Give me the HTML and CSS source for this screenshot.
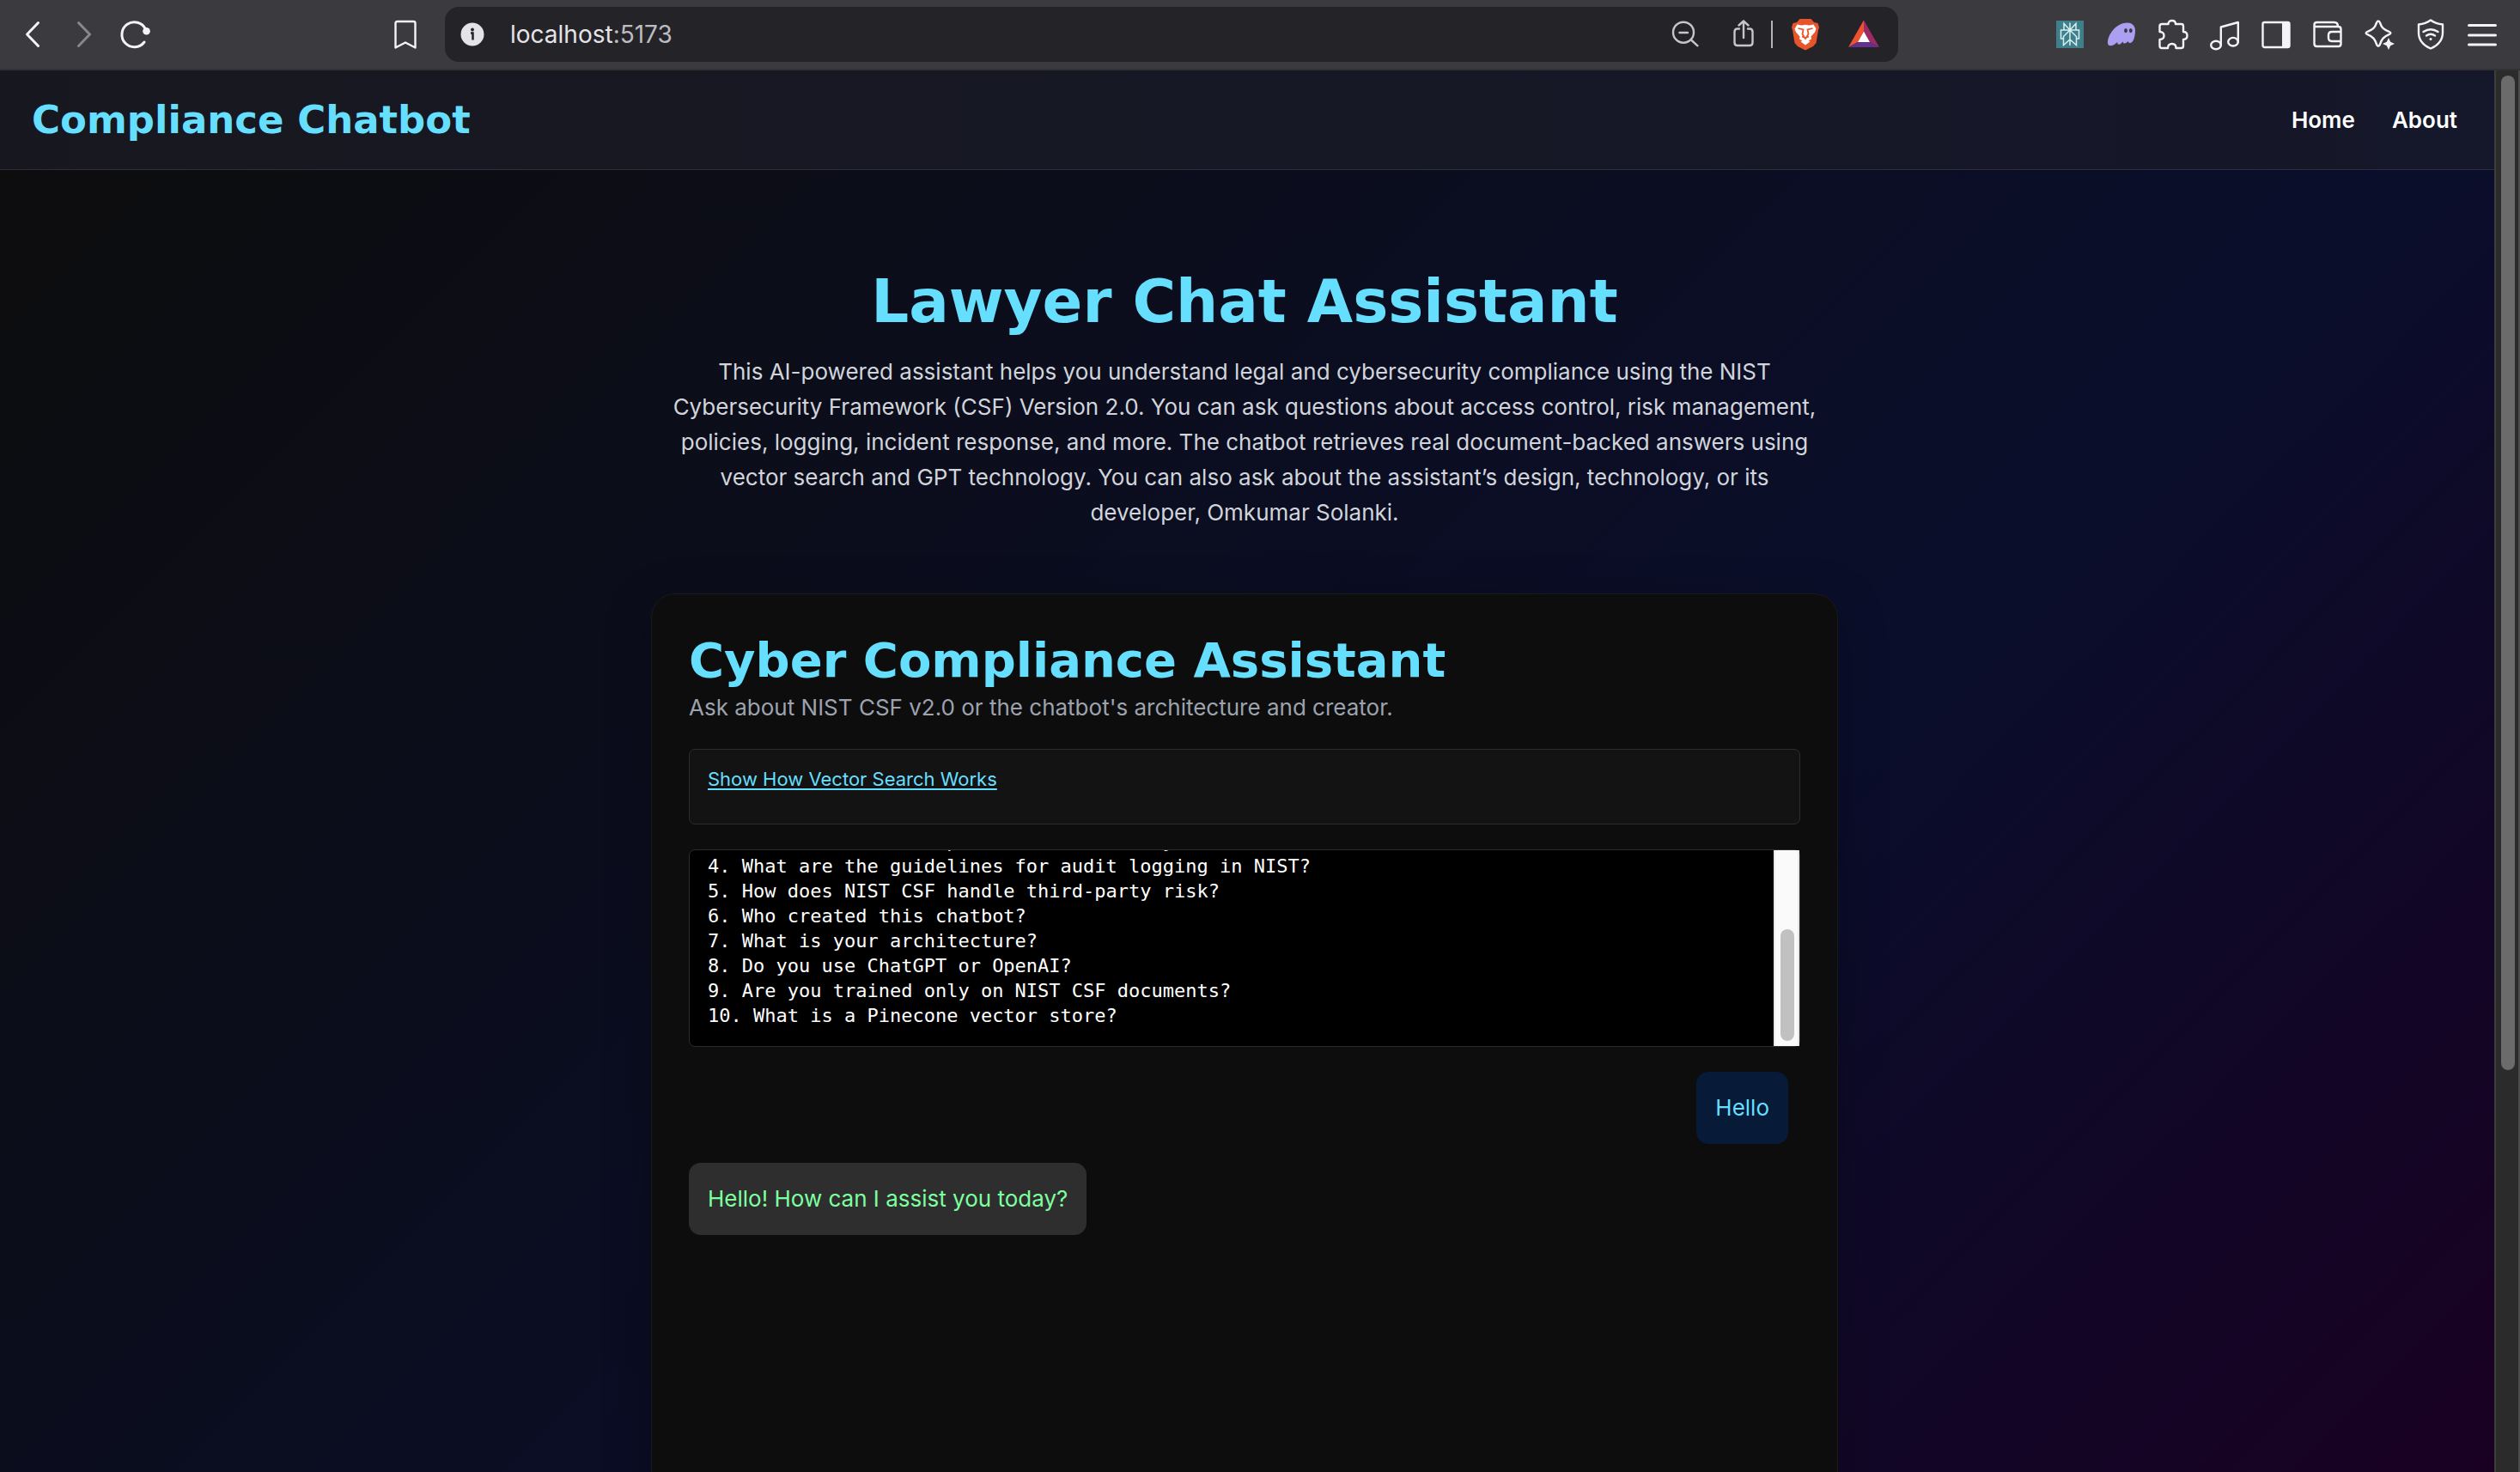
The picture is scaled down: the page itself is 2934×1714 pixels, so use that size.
FILE: index.html
```html
<!DOCTYPE html>
<html lang="en">
<head>
<meta charset="utf-8">
<meta name="viewport" content="width=device-width, initial-scale=1">
<title>Compliance Chatbot</title>
<link rel="stylesheet" href="styles.css">
</head>
<body>
<div class="toolbar">
  <div class="history">
    <button class="tool" type="button" aria-label="Back"><svg class="icon" viewBox="0 0 40 40"><path d="M26.500 6.500L13.500 20l13 13.500"/></svg></button>
    <button class="tool tool-off" type="button" aria-label="Forward"><svg class="icon" viewBox="0 0 40 40"><path d="M13.500 6.500L26.500 20l-13 13.500"/></svg></button>
    <button class="tool" type="button" aria-label="Reload"><svg class="icon" viewBox="0 0 40 40"><path d="M31.500 14A14.500 14.500 0 1 0 30 29"/><circle class="solid" cx="32.500" cy="16.300" r="4.300"/></svg></button>
  </div>
  <button class="tool" type="button" aria-label="Bookmark"><svg class="icon icon-thin" viewBox="0 0 40 40"><path d="M10.500 5h19q2 0 2 2V35.500L20 29.500 8.500 35.500V7q0-2 2-2z"/></svg></button>
  <div class="address">
    <svg class="info" viewBox="0 0 28 28"><circle cx="14" cy="14" r="13.500" fill="#e4e3e8"/><circle cx="14" cy="8.500" r="1.900" fill="#242328"/><path d="M12 12.500h2.500v8" fill="none" stroke="#242328" stroke-width="2.500"/></svg>
    <span class="url">localhost<span class="port">:5173</span></span>
    <div class="address-tools">
      <button class="tool tool-dim" type="button" aria-label="Zoom"><svg class="icon icon-thin" viewBox="0 0 40 40"><circle cx="18" cy="17.700" r="12"/><path d="M27 26.500l7.500 6.800M13.500 18h9.500"/></svg></button>
      <button class="tool tool-dim" type="button" aria-label="Share"><svg class="icon icon-thin" viewBox="0 0 40 40"><path d="M15 13.500h-2q-3.500 0-3.500 3.500v12.500q0 3.500 3.500 3.500h14q3.500 0 3.500-3.500V17q0-3.500-3.500-3.500h-2M20 24V5M14.500 9.500L20 4.500l5.500 5"/></svg></button>
      <span class="divider"></span>
      <button class="tool" type="button" aria-label="Brave Shields"><svg class="logo" viewBox="0 0 40 40"><path fill="#e9552a" d="M13.500 2h13l3.500 4 4.500 1 1.500 5-1 3-2.500 15-3.500 4-9 4.500L11 34l-3.500-4L5 15l-1-3 1.500-5L10 6z"/><path fill="#fff" d="M10.500 8.500l5 1 4.500-.8 4.500.8 5-1 3 5-1.500 4-4.500 5 .5 3-4 2.500-3-2-3 2-4-2.500.5-3-4.500-5-1.500-4zM14.500 28.500l5.500-3 5.500 3-5.500 4z"/><path fill="none" stroke="#e9552a" stroke-width="1.800" d="M11.500 13l6 1.500-1 5 2 3.500 1.500 2 1.500-2 2-3.500-1-5 6-1.500M16 22.500l4 1.500 4-1.500"/></svg></button>
      <button class="tool" type="button" aria-label="Rewards"><svg class="logo" viewBox="0 0 40 40"><path fill="#9e2a63" d="M20 3.500L38 35 27 29 20 16.500z"/><path fill="#f0522f" d="M20 3.500L2 35l11-6 7-12.500z"/><path fill="#63308e" d="M2 35l11-6h14l11 6z"/><path fill="#fff" d="M20 16.500L27 29H13z"/></svg></button>
    </div>
  </div>
  <div class="extensions">
    <button class="tool" type="button" aria-label="Perplexity"><svg class="logo" viewBox="0 0 40 40"><path fill="#3f7f8b" d="M4 4h32v32H4z"/><path fill="none" stroke="#d5eeee" stroke-width="1.500" d="M20 6.500V33M13 15V7.500l7 7.500 7-7.500V15M12.500 25h-3V15h21v10h-3M20 15l-7.500 7.500v10L20 26l7.500 6.500v-10z"/></svg></button>
    <button class="tool" type="button" aria-label="Phantom"><svg class="logo" viewBox="0 0 40 40"><path fill="#ab9ff2" d="M4 30C4 20 14 6.500 27 6.500c6 0 9.500 4.500 9 10.500-.5 7-2.500 13-6 13-1.800 0-2.300-1-2.500-2.200-1 2-2.700 3-4.300 2.700-1.200-.2-1.700-1-1.700-2.200-1.500 2.200-3 3.700-4.800 3.400-1.200-.2-1.700-1.200-1.400-2.700C12 32 9.500 33.500 7 33.300 5 33.200 4 32 4 30z"/><ellipse cx="25" cy="15.600" rx="1.900" ry="2.600" fill="#3b3a3f"/><ellipse cx="30.800" cy="15.600" rx="1.900" ry="2.600" fill="#3b3a3f"/></svg></button>
    <button class="tool" type="button" aria-label="Extensions"><svg class="icon icon-thin" viewBox="0 0 40 40"><path d="M7 8H14.500C14.500 5 16.500 4 18.800 4S23 5 23 8h6.500q2.500 0 2.500 2.500V17c3 0 4.500 2 4.500 4.500S35 26 32 26v7.500q0 2.500-2.500 2.500H23.500C23.500 32.500 21.500 31 18.800 31S14 32.500 14 36H7q-2.500 0-2.500-2.500V26C8 26 9.500 24 9.500 21.500S8 17 4.500 17V10.500Q4.500 8 7 8z"/></svg></button>
    <button class="tool" type="button" aria-label="Playlist"><svg class="icon icon-thin" viewBox="0 0 40 40"><ellipse cx="10" cy="32.500" rx="5.800" ry="4.800"/><ellipse cx="30" cy="28.700" rx="5.800" ry="4.800"/><path d="M15.800 32.500V11.500L35.800 6v22.700"/></svg></button>
    <button class="tool" type="button" aria-label="Sidebar"><svg class="icon icon-thin" viewBox="0 0 40 40"><rect x="4.500" y="6" width="31" height="29" rx="2"/><path class="solid" d="M27 6h9v29h-9z"/></svg></button>
    <button class="tool" type="button" aria-label="Wallet"><svg class="icon icon-thin" viewBox="0 0 40 40"><path d="M4.500 11V31q0 3 3 3h25q3 0 3-3V14q0-3-3-3H4.500V9q0-3 3-3H28q4 0 4 5M35.500 17H25q-4 0-4 4v3q0 4 4 4h10.500"/></svg></button>
    <button class="tool" type="button" aria-label="Leo AI"><svg class="icon icon-thin" viewBox="0 0 40 40"><path d="M19 4.500c1 0 1.500.8 2 2 2 6 4 7.700 10.500 10.300 2.500 1 2.500 2.400 0 3.400C25 23 23 25.500 21 31.500c-1 3-3 3-4 0-2-6-4-8.500-10.500-11.300-2.500-1-2.500-2.400 0-3.400C13 14.200 15 12.500 17 6.500c.5-1.200 1-2 2-2z"/><path class="solid cutout" d="M31 24l2.200 4.800L38 31l-4.800 2.200L31 38l-2.200-4.800L24 31l4.800-2.200z"/></svg></button>
    <button class="tool" type="button" aria-label="VPN"><svg class="icon icon-thin" viewBox="0 0 40 40"><path d="M20 3.500C25 7 29 8 34 8.500V18c0 9-6 15-14 18.500C12 33 6 27 6 18V8.500C11 8 15 7 20 3.500zM11.500 17q8.500-5.500 17 0M15 21.500q5-3.500 10 0"/><circle class="solid" cx="20" cy="25.500" r="1.500"/></svg></button>
    <button class="tool" type="button" aria-label="Menu"><svg class="icon" viewBox="0 0 40 40"><path d="M4.500 9.500h31M4.500 21h31M4.500 32h31"/></svg></button>
  </div>
</div>

<div class="viewport">
  <div class="page">
    <header class="site-nav">
      <a class="brand" href="#">Compliance Chatbot</a>
      <nav class="links"><a href="#">Home</a><a href="#">About</a></nav>
    </header>
    <main class="content">
      <section class="hero">
        <h1>Lawyer Chat Assistant</h1>
        <p>This AI-powered assistant helps you understand legal and cybersecurity compliance using the NIST Cybersecurity Framework (CSF) Version 2.0. You can ask questions about access control, risk management, policies, logging, incident response, and more. The chatbot retrieves real document-backed answers using vector search and GPT technology. You can also ask about the assistant’s design, technology, or its developer, Omkumar Solanki.</p>
      </section>
      <section class="card">
        <h2>Cyber Compliance Assistant</h2>
        <p class="subtitle">Ask about NIST CSF v2.0 or the chatbot's architecture and creator.</p>
        <div class="explain"><button class="explain-toggle" type="button">Show How Vector Search Works</button></div>
        <div class="samples">
          <pre class="questions">3. How does NIST CSF protect web identity?
4. What are the guidelines for audit logging in NIST?
5. How does NIST CSF handle third-party risk?
6. Who created this chatbot?
7. What is your architecture?
8. Do you use ChatGPT or OpenAI?
9. Are you trained only on NIST CSF documents?
10. What is a Pinecone vector store?</pre>
          <div class="samples-scroll"><div class="samples-thumb"></div></div>
        </div>
        <div class="messages">
          <div class="message message-user">Hello</div>
          <div class="message message-bot">Hello! How can I assist you today?</div>
        </div>
      </section>
    </main>
  </div>
  <div class="page-scroll"><div class="page-thumb"></div></div>
</div>
</body>
</html>
```
FILE: styles.css
```css
:root {
  --accent: #66dfff;
  --body-font: Inter, "Liberation Sans", sans-serif;
  --display-font: "DejaVu Sans", sans-serif;
  --mono-font: "DejaVu Sans Mono", monospace;
}

* { box-sizing: border-box; }

body {
  margin: 0;
  height: 100vh;
  display: flex;
  flex-direction: column;
  overflow: hidden;
  background: #0d0d0d;
  color: #fff;
  font: 400 26px/41px var(--body-font);
}

h1, h2, p, pre { margin: 0; }
a { color: inherit; text-decoration: none; }
button { border: 0; padding: 0; background: none; color: inherit; font: inherit; }

/* Browser toolbar */
.toolbar {
  flex: none;
  display: flex;
  align-items: center;
  height: 82px;
  padding: 0 14px 0 8px;
  background: #3b3a3f;
  border-bottom: 2px solid #323135;
}

.history { display: flex; width: 434px; }
.extensions { display: flex; margin-left: 170px; }

.tool {
  flex: none;
  display: flex;
  align-items: center;
  justify-content: center;
  width: 60px;
  height: 60px;
  color: #f4f4f6;
}

.tool-off { color: #88878b; }
.tool-dim { color: #c6c5ca; }

.icon, .logo { width: 40px; height: 40px; }

.icon {
  fill: none;
  stroke: currentColor;
  stroke-width: 3;
  stroke-linecap: round;
  stroke-linejoin: round;
}

.icon-thin { stroke-width: 2.4; }
.icon .solid { fill: currentColor; stroke: none; }
.icon .cutout { stroke: #3b3a3f; stroke-width: 2; paint-order: stroke; }

.address {
  flex: 1;
  display: flex;
  align-items: center;
  height: 64px;
  margin-left: 16px;
  padding: 0 10px 0 18px;
  border-radius: 16px;
  background: #242328;
}

.info { flex: none; width: 28px; height: 28px; }
.url { flex: 1; margin-left: 30px; font-size: 28px; color: #e4e3e8; }
.port { color: #bdbcc1; }
.address-tools { display: flex; align-items: center; gap: 8px; }
.divider { width: 2px; height: 32px; margin-left: -6px; background: #b4b3b8; }

/* Page */
.viewport {
  flex: 1;
  min-height: 0;
  display: flex;
  overflow: hidden;
}

.page {
  flex: 1;
  overflow: hidden;
  background: linear-gradient(135deg, #0d0d0d, #0a0e2b 65%, #190022);
}

.site-nav {
  display: flex;
  align-items: center;
  justify-content: space-between;
  height: 116px;
  padding: 0 43px 0 37px;
  background: linear-gradient(90deg, #17181f, #15172a);
  border-bottom: 1px solid #2d2e39;
}

.brand { font: 700 45px/60px var(--display-font); color: var(--accent); }
.links { display: flex; gap: 43px; font-weight: 600; }

.content { padding: 107px 6px 0 0; }

.hero, .card { max-width: 1382px; margin: 0 auto; }

.hero { padding: 0 14px; text-align: center; color: #d1d5db; }

.hero h1 {
  margin-bottom: 15px;
  font: 700 69px/92px var(--display-font);
  color: var(--accent);
}

.card {
  margin-top: 74px;
  padding: 43px;
  border: 1px solid #1a1a1b;
  border-radius: 28px;
  background: #0d0d0d;
  box-shadow: 0 14px 56px rgba(0, 0, 0, 0.25);
}

.card h2 { font: 700 56px/68px var(--display-font); color: var(--accent); }
.subtitle { color: #9ca3af; }

.explain {
  height: 88px;
  margin-top: 28px;
  padding: 14px 21px;
  border: 1px solid #2d2d2d;
  border-radius: 7px;
  background: #131313;
}

.explain-toggle {
  display: block;
  font-size: 22px;
  color: var(--accent);
  text-decoration: underline;
  text-underline-offset: 3px;
}

.samples {
  display: flex;
  height: 230px;
  margin-top: 29px;
  border: 1px solid #2d2d2d;
  border-radius: 7px;
  background: #000;
}

.questions {
  flex: 1;
  display: flex;
  flex-direction: column;
  justify-content: flex-end;
  overflow: hidden;
  padding: 0 21px 21px;
  font: 400 22px/29px var(--mono-font);
}

.samples-scroll {
  width: 30px;
  padding: 92px 6px 6px;
  border: solid #e8e8e8;
  border-width: 0 2px;
  background: #fafafa;
}

.samples-thumb { width: 16px; height: 130px; border-radius: 8px; background: #c1c1c1; }

.messages {
  display: flex;
  flex-direction: column;
  align-items: flex-start;
  gap: 22px;
  min-height: 720px;
  margin-top: 29px;
  padding-right: 14px;
}

.message { padding: 21px 22px 22px; border-radius: 14px; }
.message-user { align-self: flex-end; background: #071a38; color: var(--accent); }
.message-bot { background: #2e2e2e; color: #7dffa0; }

.page-scroll {
  flex: none;
  width: 30px;
  padding: 6px;
  border: solid #3d3d3d;
  border-width: 0 2px;
  border-right-color: #4b4b4b;
  background: #2b2b2b;
}

.page-thumb { width: 16px; height: 71.5%; border-radius: 8px; background: #6b6b6b; }
```
